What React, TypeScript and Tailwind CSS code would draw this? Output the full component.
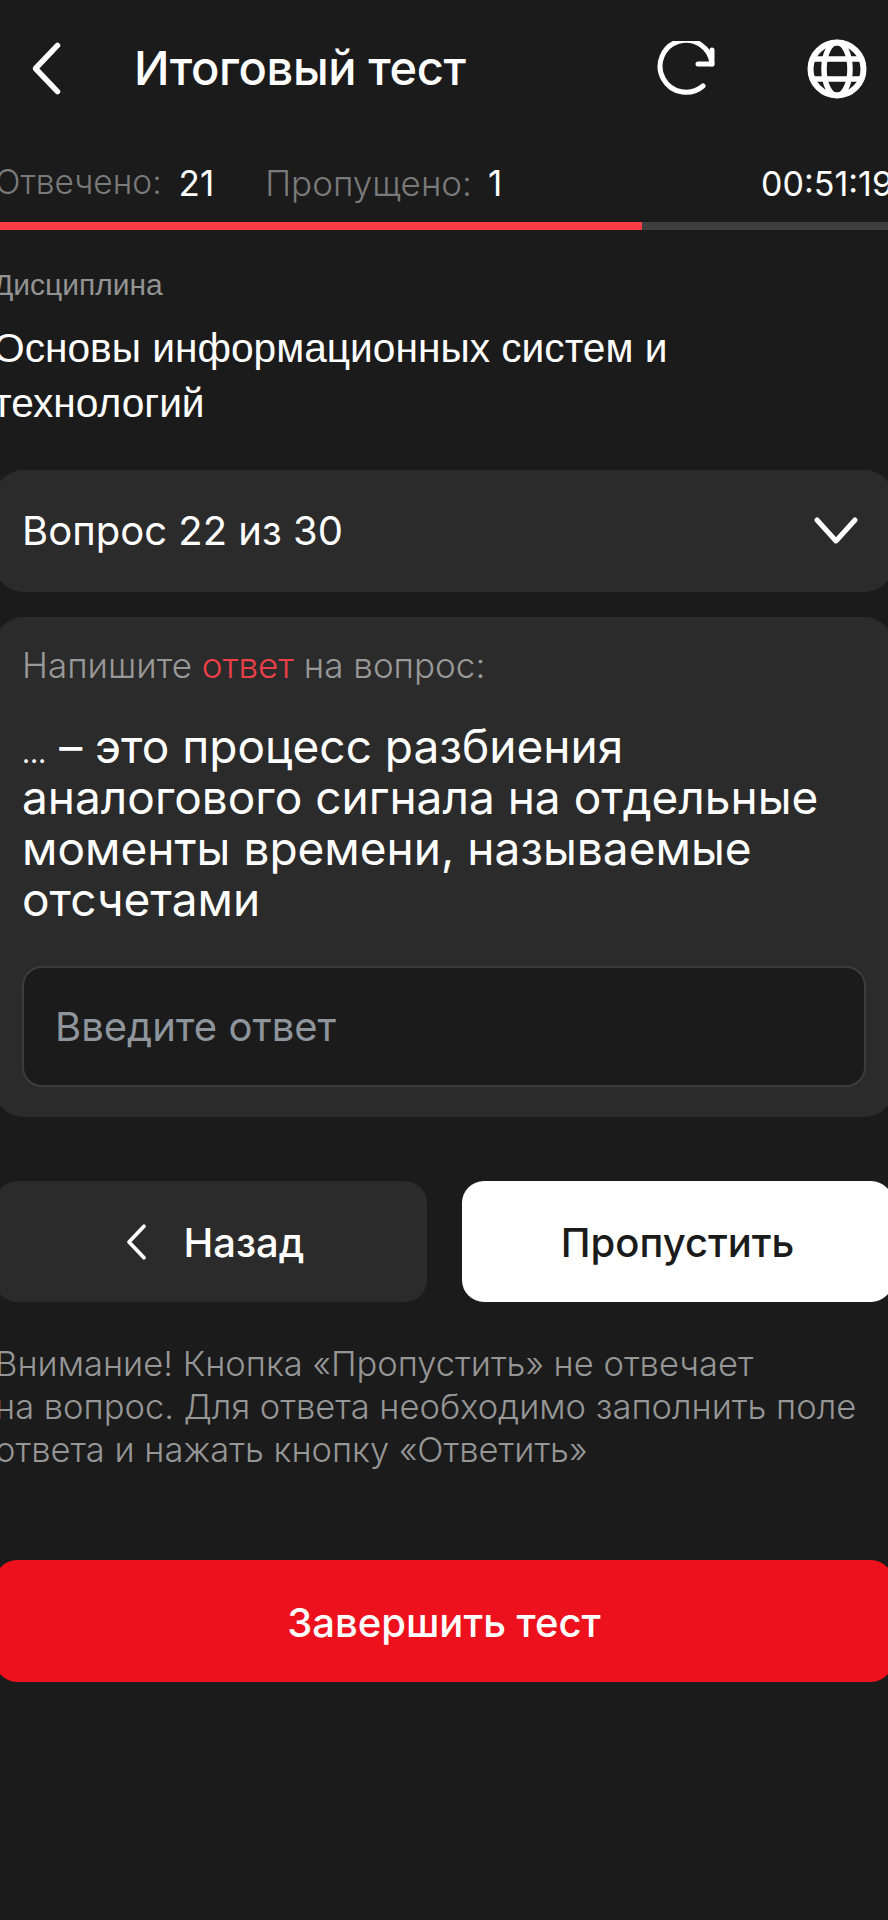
const display = "font-['Inter',sans-serif]";

function Chevron({ className }: { className: string }) {
  return (
    <svg viewBox="0 0 28 50" fill="none" className={className}>
      <path d="M24 4 4 25l20 21" stroke="white" strokeWidth="5" strokeLinecap="round" strokeLinejoin="round" />
    </svg>
  );
}

export default function App() {
  return (
    <div className={`w-[888px] h-[1920px] overflow-hidden bg-[#1b1b1b] text-white ${display}`}>
      <div className="-mx-[5px]">
        <header className="flex items-center h-[136px] pl-[36px] pr-[26px]">
          <Chevron className="w-[31px] h-[55px]" />
          <h1 className="ml-[72px] text-[47px] font-medium tracking-[-0.4px] flex-1">Итоговый тест</h1>
          <svg viewBox="0 0 60 60" fill="none" className="w-[60px] h-[60px] mt-[6px]">
            <path d="M48 45A26 26 0 1 1 57 23" stroke="white" strokeWidth="5" strokeLinecap="round" />
            <path d="M57 9v14H43" stroke="white" strokeWidth="5" strokeLinecap="round" strokeLinejoin="round" />
          </svg>
          <svg viewBox="0 0 60 60" fill="none" className="w-[60px] h-[60px] ml-[92px] mt-[2px]">
            <circle cx="30" cy="30" r="26.5" stroke="white" strokeWidth="6" />
            <ellipse cx="30" cy="30" rx="13" ry="26.5" stroke="white" strokeWidth="5.5" />
            <path d="M4 20h52M4 40h52" stroke="white" strokeWidth="5.5" />
          </svg>
        </header>

        <div className="flex items-center justify-between h-[86px] pt-[8px] text-[35px]">
          <div className="flex">
            <span className="text-[#7a7a7a] font-light text-[33.5px]">Отвечено:</span>
            <span className="ml-[17px]">21</span>
            <span className="ml-[51px] text-[#7a7a7a] font-light">Пропущено:</span>
            <span className="ml-[16px]">1</span>
          </div>
          <span className="text-[34px]">00:51:19</span>
        </div>

        <div className="h-[8px] bg-[#3e3e3e]">
          <div className="h-full w-[647px] bg-[#ff3b47]" />
        </div>

        <section className="mt-[38px] -ml-[2px] font-['Liberation_Sans',sans-serif]">
          <p className="text-[30px] leading-[34px] text-[#939393]">Дисциплина</p>
          <p className="mt-[19px] text-[40.7px] leading-[55px]">
            Основы информационных систем и
            <br />
            технологий
          </p>
        </section>

        <div className="mt-[39px] flex items-center justify-between h-[122px] rounded-[28px] bg-[#2b2b2b] pl-[27px] pr-[35px]">
          <span className="text-[40px]">Вопрос 22 из 30</span>
          <svg viewBox="0 0 44 28" fill="none" className="w-[44px] h-[28px]">
            <path d="M3 3l19 21L41 3" stroke="white" strokeWidth="5" strokeLinecap="round" strokeLinejoin="round" />
          </svg>
        </div>

        <div className="mt-[25px] h-[500px] rounded-[28px] bg-[#2b2b2b] px-[27px] pt-[27px]">
          <p className="text-[35px] leading-[42px] font-light text-[#999999]">
            Напишите <span className="text-[#ef3f48]">ответ</span> на вопрос:
          </p>
          <p className="mt-[35px] text-[46px] leading-[51px]">
            <span className="text-[28px] leading-none">…</span> – это процесс разбиения
            <br />
            аналогового сигнала на отдельные
            <br />
            моменты времени, называемые
            <br />
            отсчетами
          </p>
          <div className="mt-[41px] flex items-center h-[121px] rounded-[20px] border-2 border-[#3c3c3c] bg-[#1b1b1b] px-[31px] text-[40px] text-[#8f959c]">
            Введите ответ
          </div>
        </div>

        <div className="mt-[64px] flex gap-[35px]">
          <button className="flex w-[432px] shrink-0 items-center justify-center gap-[37px] h-[121px] pl-[8px] rounded-[22px] bg-[#2b2b2b] text-[40px] font-medium">
            <Chevron className="w-[21px] h-[38px]" />
            <span className="pt-[3px]">Назад</span>
          </button>
          <button className="flex-1 h-[121px] pt-[3px] rounded-[22px] bg-white text-[#1b1b1b] text-[40px] font-medium">
            Пропустить
          </button>
        </div>

        <p className="mt-[40px] text-[34.5px] leading-[43px] font-light text-[#969696]">
          Внимание! Кнопка «Пропустить» не отвечает
          <br />
          на вопрос. Для ответа необходимо заполнить поле
          <br />
          ответа и нажать кнопку «Ответить»
        </p>

        <button className="mt-[89px] w-full h-[122px] pt-[3px] rounded-[22px] bg-[#ed111d] text-[40px] font-medium">
          Завершить тест
        </button>
      </div>
    </div>
  );
}
